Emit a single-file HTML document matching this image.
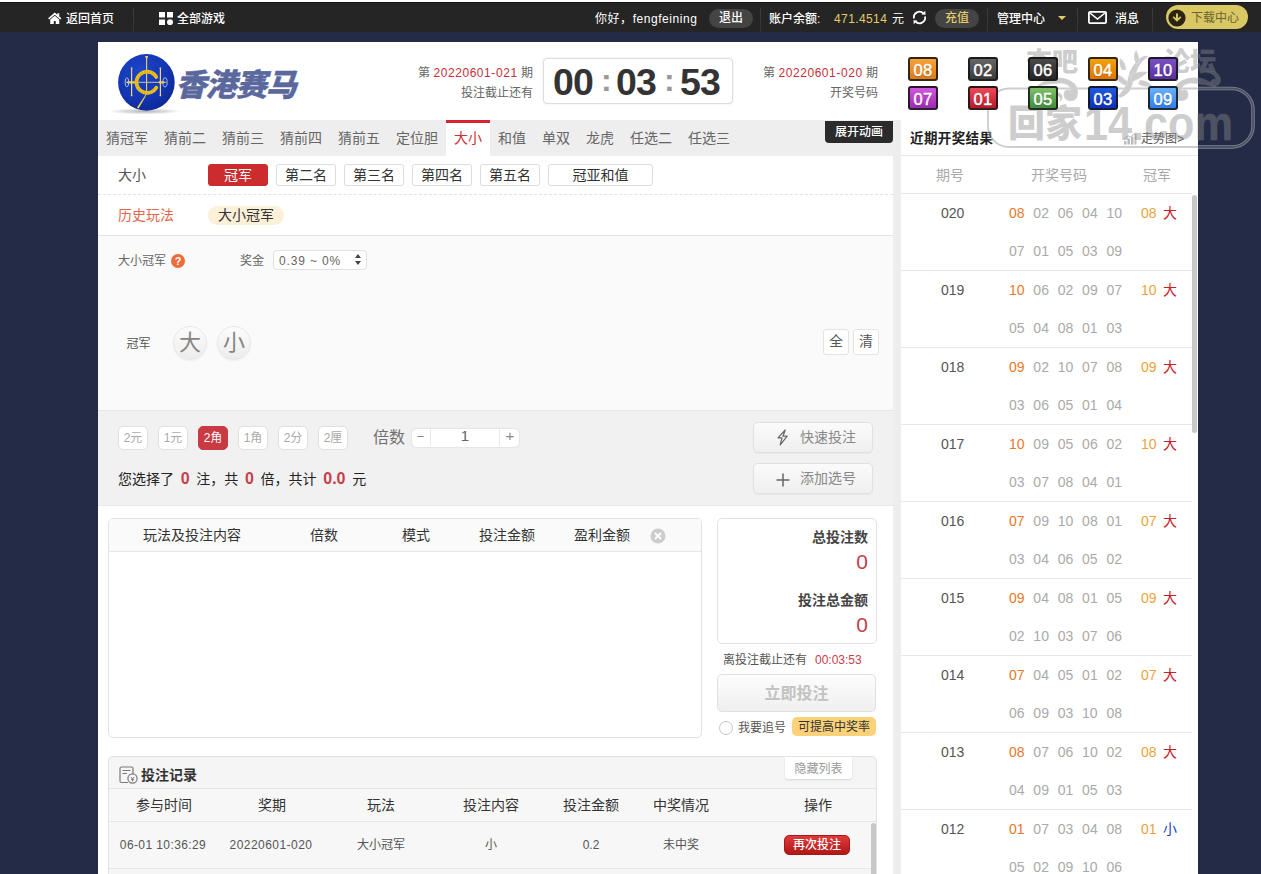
<!DOCTYPE html>
<html lang="zh-CN">
<head>
<meta charset="utf-8">
<title>香港赛马</title>
<style>
*{box-sizing:border-box;margin:0;padding:0}
html,body{width:1261px;height:874px;overflow:hidden}
body{background:#232b47;font-family:"Liberation Sans","Noto Sans CJK SC",sans-serif;font-size:12px;color:#333;position:relative}
.abs{position:absolute}
#topline{position:absolute;left:0;top:0;width:1261px;height:2px;background:#fff}
#topbar{position:absolute;left:0;top:2px;width:1261px;height:30px;background:#252525;box-shadow:inset 0 1px 0 #141414;color:#fff;font-size:12px}
#topbar .t{position:absolute;top:0;height:30px;line-height:35px;white-space:nowrap;font-weight:500}
#topbar .dv{position:absolute;top:6px;width:1px;height:24px;background:linear-gradient(#3e3e3e,#343434)}
.pill{position:absolute;top:7px;height:19px;line-height:19px;border-radius:10px;background:#444;text-align:center;font-weight:500}
#main{position:absolute;left:98px;top:42px;width:1100px;height:832px;background:#fff}
/* header */
#hdr{position:absolute;left:0;top:0;width:1100px;height:78px;background:#fff}
.issue{position:absolute;text-align:right;font-size:12px;line-height:20px;color:#666;white-space:nowrap}
.issue b{font-weight:normal;color:#c5303a;letter-spacing:.57px}
#timer{position:absolute;left:445px;top:16px;width:190px;height:46px;border:1px solid #ddd;border-radius:4px;background:#fff;box-shadow:0 0 3px rgba(0,0,0,.08)}
#timer span{position:absolute;top:1px;line-height:45px;font-size:37.5px;font-weight:bold;color:#333;letter-spacing:-.8px}
#timer i{position:absolute;top:-1.5px;line-height:45px;font-size:32px;font-weight:bold;color:#999;font-style:normal}
.ball{position:absolute;z-index:6;width:30px;height:24px;border-radius:3px;border:2px solid rgba(20,20,20,.85);color:#fff;font-size:16.5px;line-height:22px;text-align:center;-webkit-text-stroke:.45px #fff;letter-spacing:.3px;text-shadow:0 1px 1px rgba(0,0,0,.3)}
/* tabs */
#tabs{position:absolute;left:0;top:78px;width:795px;height:36px;background:#eee}
#tabs span{position:absolute;top:0;height:36px;line-height:37px;font-size:14px;color:#666;white-space:nowrap}
#tabs .on{background:#fff;border-top:3px solid #d9232e;color:#cb333b;padding:0 8px;line-height:31px}
#anim{position:absolute;left:727px;top:79px;width:68px;height:21.5px;background:#2b2b2b;color:#fff;font-size:12px;font-weight:500;line-height:22px;text-align:center;border-radius:0 0 4px 4px}
#gap{position:absolute;left:795px;top:78px;width:8px;height:754px;background:#eee}

/* left panel */
#lp{position:absolute;left:0;top:114px;width:795px;height:718px;background:#fff}
.row1 .lbl{position:absolute;left:20px;top:9px;font-size:14px;line-height:20px;color:#555}
.sbtn{position:absolute;top:8px;height:22px;width:60px;line-height:20px;border:1px solid #ddd;border-radius:3px;background:#fff;font-size:14px;color:#333;text-align:center}
.sbtn.on{background:#cd2c2f;border-color:#cd2c2f;color:#fff}
#dash{position:absolute;left:0;top:38px;width:795px;height:0;border-top:1px dashed #e3e3e3}
#play{position:absolute;left:0;top:79px;width:795px;height:175px;background:#fafafa;border-top:1px solid #e4e4e4}
.circ{position:absolute;top:90px;width:34px;height:34px;border-radius:50%;background:linear-gradient(#fcfcfc,#ececec);border:1px solid #e8e8e8;color:#858585;font-size:22px;line-height:32px;text-align:center;box-shadow:0 1px 2px rgba(0,0,0,.05)}
.qbtn{position:absolute;top:93px;width:26px;height:26px;border:1px solid #e4e4e4;border-radius:3px;background:#fff;color:#555;font-size:14px;line-height:23px;text-align:center}
#band{position:absolute;left:0;top:254px;width:795px;height:96px;background:#f1f1f1;border-top:1px solid #e6e6e6;border-bottom:1px solid #e9e9e9}
.unit{position:absolute;top:15px;width:30px;height:24px;border:1px solid #e0e0e0;border-radius:5px;background:#fff;color:#aaa;font-size:12px;line-height:22px;text-align:center}
.unit.on{background:#c93a43;border-color:#c93a43;color:#fff}
.gbtn{position:absolute;left:655px;width:120px;height:31px;border:1px solid #e0e0e0;border-radius:5px;background:linear-gradient(#fbfbfb,#efefef);color:#888;font-size:14px;line-height:29px;padding-left:46px;box-shadow:0 1px 1px rgba(0,0,0,.04)}
#betbox{position:absolute;left:10px;top:362px;width:594px;height:220px;border:1px solid #e2e2e2;border-radius:5px;background:#fff;overflow:hidden}
#betbox .h{position:absolute;left:0;top:0;width:100%;height:33px;background:#fafafa;border-bottom:1px solid #e6e6e6}
#betbox .h span{position:absolute;top:0;line-height:32px;font-size:14px;color:#333;white-space:nowrap}
#sum{position:absolute;left:619px;top:362px;width:160px;height:126px;border:1px solid #e2e2e2;border-radius:5px;background:#fff}
#sum .k{position:absolute;right:8px;font-size:14px;font-weight:bold;color:#444;line-height:20px;white-space:nowrap}
#sum .v{position:absolute;right:8px;font-size:21px;color:#c5404a;line-height:24px}
#go{position:absolute;left:619px;top:518px;width:159px;height:38px;border:1px solid #e0e0e0;border-radius:5px;background:linear-gradient(#fdfdfd,#efefef);color:#c2c2c2;font-size:16px;font-weight:bold;line-height:37px;text-align:center}
#rec{position:absolute;left:10px;top:600px;width:769px;height:130px;border:1px solid #e2e2e2;border-radius:5px 5px 0 0;background:#f5f5f5;overflow:hidden}
#rec .th{position:absolute;top:31px;left:0;width:100%;height:34px;border-top:1px solid #e6e6e6;border-bottom:1px solid #e6e6e6;background:#f7f7f7}
#rec .th span,#rec .tr span{position:absolute;top:0;transform:translateX(-50%);white-space:nowrap}
#rec .th span{font-size:14px;line-height:32px;color:#333}
#rec .tr{position:absolute;top:65px;left:0;width:100%;height:47px;border-bottom:1px solid #e6e6e6;background:#f7f7f7}
#rec .tr span{font-size:12px;line-height:46px;color:#555}
.rn{color:#c5404a;font-size:16px;font-weight:bold;margin:0 2.8px}

/* right panel */
#rp{position:absolute;left:803px;top:78px;width:297px;height:754px;background:#fff;overflow:hidden}
#rp .ttl{position:absolute;left:9px;top:8px;font-size:13.5px;font-weight:bold;line-height:22px;color:#222;letter-spacing:.4px}
#rp .trend{position:absolute;left:240px;top:9px;font-size:12px;line-height:20px;color:#555;white-space:nowrap}
#rp .hl{position:absolute;left:0;width:291px;height:1px;background:#e8e8e8}
#rp .ch{position:absolute;top:45px;font-size:14px;line-height:20px;color:#aaa;white-space:nowrap}
.rr{position:absolute;left:0;width:291px;height:77px;border-bottom:1px solid #e8e8e8;font-size:14px}
.rr span{position:absolute;line-height:20px;white-space:nowrap}
.rr .p{left:40px;top:9px;color:#555}
.rr .a{left:108px;top:9px;color:#aaa;word-spacing:4.9px}
.rr .b{left:108px;top:47px;color:#aaa;word-spacing:4.9px}
.rr .a em{font-style:normal;color:#e8792a}
.rr .w{left:240px;top:9px;color:#e9a43c}
.rr .x{left:262px;top:9px;color:#c8202a}
.rr .x.s{color:#1a3fc0}
</style>
</head>
<body>
<div id="topline"></div>
<div id="topbar">
  <svg class="abs" style="left:48px;top:10px" width="13.5" height="12.5" viewBox="0 0 15 13"><path d="M7.5 0.2 L0.1 6.6 L1.3 7.9 L7.5 2.6 L13.7 7.9 L14.9 6.6 L12.5 4.5 L12.5 0.9 L10.4 0.9 L10.4 2.7 Z" fill="#fff"/><path d="M7.5 3.7 L2.5 8 L2.5 12.8 L6.4 12.8 L6.4 9.6 L8.6 9.6 L8.6 12.8 L12.5 12.8 L12.5 8 Z" fill="#fff"/></svg>
  <span class="t" style="left:66px">返回首页</span>
  <div class="dv" style="left:133px"></div>
  <svg class="abs" style="left:159px;top:10px" width="14" height="13" viewBox="0 0 14 13"><rect x="0" y="0" width="6" height="5.5" fill="#fff"/><rect x="8" y="0" width="6" height="5.5" fill="#fff"/><rect x="0" y="7.5" width="6" height="5.5" fill="#fff"/><circle cx="11" cy="10.2" r="3" fill="#fff"/></svg>
  <span class="t" style="left:177px">全部游戏</span>
  <span class="t" style="left:595px;font-weight:normal;letter-spacing:.55px">你好，fengfeining</span>
  <div class="pill" style="left:709px;width:44px;color:#fff">退出</div>
  <div class="dv" style="left:760px"></div>
  <span class="t" style="left:769px">账户余额:</span>
  <span class="t" style="left:834px;color:#e3cb6a;font-weight:normal;letter-spacing:.4px">471.4514</span>
  <span class="t" style="left:892px;font-weight:normal">元</span>
  <svg class="abs" style="left:911px;top:7px" width="17" height="17" viewBox="0 0 17 17"><path d="M3 9.5 A5.6 5.6 0 0 1 12.6 4.6" fill="none" stroke="#fff" stroke-width="1.8"/><path d="M14 7.5 A5.6 5.6 0 0 1 4.4 12.4" fill="none" stroke="#fff" stroke-width="1.8"/><path d="M10.6 5.6 L14.6 5.8 L14.2 1.8 Z" fill="#fff"/><path d="M6.4 11.4 L2.4 11.2 L2.8 15.2 Z" fill="#fff"/></svg>
  <div class="pill" style="left:935px;width:44px;color:#e3cb6a">充值</div>
  <div class="dv" style="left:987px"></div>
  <span class="t" style="left:997px">管理中心</span>
  <div class="abs" style="left:1058px;top:14px;width:0;height:0;border-left:4px solid transparent;border-right:4px solid transparent;border-top:4px solid #e3cb6a"></div>
  <div class="dv" style="left:1077px"></div>
  <svg class="abs" style="left:1088px;top:9px" width="19" height="13" viewBox="0 0 19 13"><rect x="0.9" y="0.9" width="17.2" height="11.2" rx="1.2" fill="none" stroke="#fff" stroke-width="1.8"/><path d="M2 2 L9.5 8 L17 2" fill="none" stroke="#fff" stroke-width="1.6"/></svg>
  <span class="t" style="left:1115px">消息</span>
  <div class="dv" style="left:1152px"></div>
  <div class="pill" style="left:1166px;width:82px;top:3px;height:24px;line-height:27px;border-radius:12px;background:#d9c864;color:#6b6330;font-weight:normal;text-align:left;padding-left:25px">下载中心</div>
  <svg class="abs" style="left:1168px;top:6.5px" width="18" height="18" viewBox="0 0 18 18"><circle cx="9" cy="9" r="8.6" fill="#2a2410"/><path d="M8 4.4 H10 V9.2 L12.2 7.2 L13.4 8.5 L9 12.8 L4.6 8.5 L5.8 7.2 L8 9.2 Z" fill="#d9c864"/></svg>
</div>

<div id="main">
  <div id="hdr">
    <!-- logo -->
    <svg class="abs" style="left:7px;top:3px" width="100" height="75" viewBox="0 0 100 75">
      <defs>
        <radialGradient id="lg" cx="38%" cy="30%" r="80%"><stop offset="0" stop-color="#1c45c8"/><stop offset=".6" stop-color="#1335b2"/><stop offset="1" stop-color="#0b2694"/></radialGradient>
        <radialGradient id="sh" cx="50%" cy="50%" r="50%"><stop offset="0" stop-color="#9a9a9a" stop-opacity=".75"/><stop offset=".6" stop-color="#b5b5b5" stop-opacity=".45"/><stop offset="1" stop-color="#ccc" stop-opacity="0"/></radialGradient>
      </defs>
      <ellipse cx="40" cy="66.3" rx="37" ry="3.2" fill="url(#sh)"/>
      <circle cx="41.4" cy="37.4" r="28.3" fill="url(#lg)"/>
      <path d="M41.6 11.5 V47" stroke="#ecd257" stroke-width="1.1" fill="none"/>
      <path d="M40 11 H43.2 L41.9 14.5 H41.3 Z" fill="#ecd257"/>
      <path d="M21 37.3 H61.5" stroke="#d8d690" stroke-width=".9" fill="none"/>
      <path d="M23 37.3 H30 M54.5 37.3 H58.5" stroke="#efc92a" stroke-width="2.2" fill="none" stroke-linecap="round"/>
      <path d="M26.6 23.2 V50.6 M55.4 23.2 V50.6" stroke="#ecd680" stroke-width="1.2" fill="none"/>
      <path d="M25.8 23.2 H27.4 M25.8 50.6 H27.4 M54.6 23.2 H56.2 M54.6 50.6 H56.2" stroke="#ecd680" stroke-width="1.2"/>
      <ellipse cx="21.9" cy="37.3" rx="1.8" ry="4.6" fill="none" stroke="#b9cbe8" stroke-width=".9"/>
      <ellipse cx="60" cy="37.3" rx="2.1" ry="4.6" fill="none" stroke="#b9cbe8" stroke-width=".9"/>
      <path d="M51.3 32 A10.6 10.6 0 1 0 51.3 42.6" fill="none" stroke="#efc41f" stroke-width="3.7" stroke-linecap="round"/>
      <path d="M51.3 32 A10.6 10.6 0 1 0 51.3 42.6" fill="none" stroke="#c98a12" stroke-width="2.2" stroke-dasharray="1 1.6" opacity=".55"/>
      <path d="M41.6 47.5 Q41.4 50 40.3 52 L33.6 63.6 L32 62.4 L39.4 51.4 Z" fill="#efd04a"/>
    </svg>
    <div class="abs" style="left:77.500px;top:21.5px;font-size:31px;line-height:44px;font-weight:900;font-style:italic;color:#5a689d;-webkit-text-stroke:.35px #5a689d;letter-spacing:-.9px;white-space:nowrap">香港赛马</div>
    <div class="issue" style="right:665px;top:21px">第 <b>20220601-021</b> 期<br>投注截止还有</div>
    <div id="timer"><span style="left:9px">00</span><i style="left:57px">:</i><span style="left:72px">03</span><i style="left:120px">:</i><span style="left:136px">53</span></div>
    <div class="issue" style="right:320px;top:21px">第 <b>20220601-020</b> 期<br>开奖号码</div>
    <div class="ball" style="left:810px;top:15px;background:linear-gradient(#f5a33d,#e07b12)">08</div>
    <div class="ball" style="left:870px;top:15px;background:linear-gradient(#666,#3c3c3c)">02</div>
    <div class="ball" style="left:930px;top:15px;background:linear-gradient(#4a4a4a,#262626)">06</div>
    <div class="ball" style="left:990px;top:15px;background:linear-gradient(#f2a20c,#e07400)">04</div>
    <div class="ball" style="left:1050px;top:15px;background:linear-gradient(#7a4fc4,#5a2fa0)">10</div>
    <div class="ball" style="left:810px;top:44px;background:linear-gradient(#d457e0,#9a2bb0)">07</div>
    <div class="ball" style="left:870px;top:44px;background:linear-gradient(#ee4a5a,#b81a2a)">01</div>
    <div class="ball" style="left:930px;top:44px;background:linear-gradient(#7fbf6a,#3f8f3a)">05</div>
    <div class="ball" style="left:990px;top:44px;background:linear-gradient(#1f5be0,#0a2fc0)">03</div>
    <div class="ball" style="left:1050px;top:44px;background:linear-gradient(#6ab0ff,#2f7fe8)">09</div>
  </div>
  <div id="tabs">
    <span style="left:8px">猜冠军</span><span style="left:66px">猜前二</span><span style="left:124px">猜前三</span><span style="left:182px">猜前四</span><span style="left:240px">猜前五</span><span style="left:298px">定位胆</span>
    <span class="on" style="left:348px">大小</span>
    <span style="left:400px">和值</span><span style="left:444px">单双</span><span style="left:488px">龙虎</span><span style="left:532px">任选二</span><span style="left:590px">任选三</span>
  </div>
  <div id="anim">展开动画</div>

  <div id="lp">
    <div class="row1">
      <span class="lbl">大小</span>
      <div class="sbtn on" style="left:110px">冠军</div>
      <div class="sbtn" style="left:178px">第二名</div>
      <div class="sbtn" style="left:246px">第三名</div>
      <div class="sbtn" style="left:314px">第四名</div>
      <div class="sbtn" style="left:382px">第五名</div>
      <div class="sbtn" style="left:450px;width:105px">冠亚和值</div>
    </div>
    <div id="dash"></div>
    <span class="abs" style="left:20px;top:49px;font-size:14px;line-height:20px;color:#e2664c">历史玩法</span>
    <span class="abs" style="left:110px;top:50px;width:76px;height:19px;border-radius:10px;background:#fdf0d9;font-size:14px;line-height:19px;color:#333;text-align:center">大小冠军</span>
    <div id="play">
      <span class="abs" style="left:20px;top:15px;font-size:12px;line-height:20px;color:#666">大小冠军</span>
      <span class="abs" style="left:73px;top:18px;width:14px;height:14px;border-radius:50%;background:#ee6b3a;color:#fff;font-size:11px;font-weight:bold;line-height:14px;text-align:center">?</span>
      <span class="abs" style="left:142px;top:15px;font-size:12px;line-height:20px;color:#666">奖金</span>
      <div class="abs" style="left:175px;top:14px;width:94px;height:20px;border:1px solid #e0e0e0;border-radius:4px;background:#fff;font-size:12px;line-height:20px;color:#666;padding-left:5px;letter-spacing:.85px">0.39 ~ 0%</div>
      <div class="abs" style="left:257px;top:18px;width:0;height:0;border-left:3px solid transparent;border-right:3px solid transparent;border-bottom:4px solid #444"></div>
      <div class="abs" style="left:257px;top:25px;width:0;height:0;border-left:3px solid transparent;border-right:3px solid transparent;border-top:4px solid #444"></div>
      <span class="abs" style="left:28.5px;top:97.5px;font-size:12px;line-height:20px;color:#555">冠军</span>
      <div class="circ" style="left:75px">大</div>
      <div class="circ" style="left:119px">小</div>
      <div class="qbtn" style="left:725px">全</div>
      <div class="qbtn" style="left:755px">清</div>
    </div>
    <div id="band">
      <div class="unit" style="left:20px">2元</div>
      <div class="unit" style="left:60px">1元</div>
      <div class="unit on" style="left:100px">2角</div>
      <div class="unit" style="left:140px">1角</div>
      <div class="unit" style="left:180px">2分</div>
      <div class="unit" style="left:220px">2厘</div>
      <span class="abs" style="left:275px;top:15px;font-size:16px;line-height:24px;color:#707070">倍数</span>
      <div class="abs" style="left:312.5px;top:16.5px;width:109px;height:20px;border:1px solid #e6e6e6;border-radius:6px;background:#fff;box-shadow:0 0 2px rgba(0,0,0,.04)"></div>
      <div class="abs" style="left:332px;top:18px;width:1px;height:17px;background:#e8e8e8"></div>
      <div class="abs" style="left:401px;top:18px;width:1px;height:17px;background:#e8e8e8"></div>
      <span class="abs" style="left:313px;top:17px;width:19px;line-height:18px;text-align:center;color:#888;font-size:13px">−</span>
      <span class="abs" style="left:402px;top:15px;width:20px;line-height:19px;text-align:center;color:#888;font-size:15px">+</span>
      <span class="abs" style="left:333px;top:15px;width:68px;line-height:20px;text-align:center;color:#666;font-size:15px">1</span>
      <div class="abs" style="left:20px;top:56px;font-size:14px;line-height:24px;color:#222;white-space:nowrap">您选择了 <b class="rn">0</b> 注，共 <b class="rn">0</b> 倍，共计 <b class="rn">0.0</b> 元</div>
      <div class="gbtn" style="top:11px">快速投注</div>
      <svg class="abs" style="left:677.5px;top:17.5px" width="13" height="17" viewBox="0 0 13 17"><path d="M9.2 1 L2 8.9 L6 8.9 L4.2 15.8 L11.2 7.2 L7 7.2 Z" fill="none" stroke="#666" stroke-width="1.2" stroke-linejoin="round"/></svg>
      <div class="gbtn" style="top:52px">添加选号</div>
      <svg class="abs" style="left:678px;top:61.5px" width="14" height="14" viewBox="0 0 14 14"><path d="M7 0.5 V13.5 M0.5 7 H13.5" stroke="#666" stroke-width="1.5"/></svg>
    </div>
    <div id="betbox">
      <div class="h"><span style="left:34px">玩法及投注内容</span><span style="left:201px">倍数</span><span style="left:293px">模式</span><span style="left:370px">投注金额</span><span style="left:465px">盈利金额</span>
        <svg class="abs" style="left:541px;top:9px" width="16" height="16" viewBox="0 0 16 16"><circle cx="8" cy="8" r="7.5" fill="#ccc"/><path d="M5 5 L11 11 M11 5 L5 11" stroke="#fff" stroke-width="1.8"/></svg>
      </div>
    </div>
    <div id="sum">
      <span class="k" style="top:8px">总投注数</span><span class="v" style="top:31px">0</span>
      <span class="k" style="top:71px">投注总金额</span><span class="v" style="top:94px">0</span>
    </div>
    <span class="abs" style="left:625px;top:494px;font-size:12px;line-height:20px;color:#555;white-space:nowrap">离投注截止还有</span>
    <span class="abs" style="left:717px;top:494px;font-size:12px;line-height:20px;color:#c5404a;white-space:nowrap">00:03:53</span>
    <div id="go">立即投注</div>
    <div class="abs" style="left:621px;top:565px;width:14px;height:14px;border:1px solid #c6c6c6;border-radius:50%;background:#fff"></div>
    <span class="abs" style="left:640px;top:562px;font-size:12px;line-height:20px;color:#555;white-space:nowrap">我要追号</span>
    <span class="abs" style="left:694px;top:561px;width:84px;height:19px;border-radius:5px;background:#fbd27a;font-size:12px;line-height:21px;color:#333;text-align:center">可提高中奖率</span>
    <div id="rec">
      <svg class="abs" style="left:9.5px;top:9px" width="20" height="18" viewBox="0 0 20 18"><path d="M9 16.5 H2.5 Q1 16.5 1 15 V2.5 Q1 1 2.5 1 H12.5 Q14 1 14 2.5 V8" fill="none" stroke="#7a7a7a" stroke-width="1.2"/><path d="M3.5 4.5 H11.5 M3.5 7.5 H8" stroke="#7a7a7a" stroke-width="1.2"/><circle cx="13.5" cy="12.5" r="4.6" fill="#f5f5f5" stroke="#7a7a7a" stroke-width="1.2"/><path d="M11.8 11 L13.5 13 L15.2 11 M13.5 13 V15.5 M12 13.6 H15" fill="none" stroke="#7a7a7a" stroke-width="1"/></svg>
      <span class="abs" style="left:32px;top:6.5px;font-size:14px;font-weight:bold;line-height:22px;color:#333">投注记录</span>
      <div class="abs" style="left:676px;top:0;width:67px;height:22px;background:#fff;color:#999;font-size:12px;line-height:25px;text-align:center;border-radius:0 0 3px 3px;box-shadow:0 1px 2px rgba(0,0,0,.12)">隐藏列表</div>
      <div class="th"><span style="left:55px">参与时间</span><span style="left:163px">奖期</span><span style="left:272px">玩法</span><span style="left:382px">投注内容</span><span style="left:482px">投注金额</span><span style="left:572px">中奖情况</span><span style="left:709px">操作</span></div>
      <div class="tr"><span style="left:54px;letter-spacing:.4px">06-01 10:36:29</span><span style="left:162px;letter-spacing:.45px">20220601-020</span><span style="left:272px">大小冠军</span><span style="left:382px">小</span><span style="left:482px">0.2</span><span style="left:572px">未中奖</span>
        <div class="abs" style="left:675px;top:13px;width:66px;height:20px;border-radius:5px;background:linear-gradient(#e03a3a,#b01818);border:1px solid #a81818;color:#fff;font-size:12px;font-weight:500;line-height:18px;text-align:center">再次投注</div>
      </div>
      <div class="abs" style="left:762px;top:66px;width:5px;height:70px;border-radius:3px;background:#c8c8c8"></div>
    </div>
  </div>
  <div id="gap"></div>
  <div id="rp">
    <span class="ttl">近期开奖结果</span>
    <svg class="abs" style="left:222px;top:12px" width="14" height="13" viewBox="0 0 14 13"><path d="M1 12.5 V9 H3.5 V12.5 M4.5 12.5 V6.5 H7 V12.5 M8 12.5 V4.5 H10.5 V12.5 M11.5 12.5 V2 H13.5 V12.5" fill="#bbb"/><path d="M1 7 L5 3.8 L7.5 5 L12.5 0.8" fill="none" stroke="#bbb" stroke-width="1"/></svg>
    <span class="trend">走势图&gt;</span>
    <div class="hl" style="top:35px;width:297px"></div>
    <span class="ch" style="left:35px">期号</span><span class="ch" style="left:130px">开奖号码</span><span class="ch" style="left:242px">冠军</span>
    <div class="hl" style="top:73px"></div>
    <div class="rr" style="top:74px"><span class="p">020</span><span class="a"><em>08</em> 02 06 04 10</span><span class="b">07 01 05 03 09</span><span class="w">08</span><span class="x">大</span></div>
    <div class="rr" style="top:151px"><span class="p">019</span><span class="a"><em>10</em> 06 02 09 07</span><span class="b">05 04 08 01 03</span><span class="w">10</span><span class="x">大</span></div>
    <div class="rr" style="top:228px"><span class="p">018</span><span class="a"><em>09</em> 02 10 07 08</span><span class="b">03 06 05 01 04</span><span class="w">09</span><span class="x">大</span></div>
    <div class="rr" style="top:305px"><span class="p">017</span><span class="a"><em>10</em> 09 05 06 02</span><span class="b">03 07 08 04 01</span><span class="w">10</span><span class="x">大</span></div>
    <div class="rr" style="top:382px"><span class="p">016</span><span class="a"><em>07</em> 09 10 08 01</span><span class="b">03 04 06 05 02</span><span class="w">07</span><span class="x">大</span></div>
    <div class="rr" style="top:459px"><span class="p">015</span><span class="a"><em>09</em> 04 08 01 05</span><span class="b">02 10 03 07 06</span><span class="w">09</span><span class="x">大</span></div>
    <div class="rr" style="top:536px"><span class="p">014</span><span class="a"><em>07</em> 04 05 01 02</span><span class="b">06 09 03 10 08</span><span class="w">07</span><span class="x">大</span></div>
    <div class="rr" style="top:613px"><span class="p">013</span><span class="a"><em>08</em> 07 06 10 02</span><span class="b">04 09 01 05 03</span><span class="w">08</span><span class="x">大</span></div>
    <div class="rr" style="top:690px"><span class="p">012</span><span class="a"><em>01</em> 07 03 04 08</span><span class="b">05 02 09 10 06</span><span class="w">01</span><span class="x s">小</span></div>
    <div class="abs" style="left:291px;top:75px;width:5px;height:238px;border-radius:3px;background:#c8c8c8"></div>
  </div>

</div>

<svg id="wm" style="position:absolute;left:980px;top:36px;pointer-events:none;z-index:5" width="281" height="120" viewBox="0 0 281 120">
  <g opacity=".42">
    <rect x="8" y="52.5" width="265" height="58.5" rx="21" fill="none" stroke="#fff" stroke-width="3.4"/>
    <rect x="8" y="52.5" width="265" height="58.5" rx="21" fill="none" stroke="#8a8a8a" stroke-width="1.8"/>
    <g font-family="'Liberation Sans','Noto Sans CJK SC',sans-serif" font-weight="900" fill="#8a8a8a" stroke="#fff" stroke-width=".5" stroke-opacity=".6" paint-order="stroke">
      <text x="46" y="34.5" font-size="26">杏吧</text>
      <text x="184" y="34.5" font-size="26">论坛</text>
      <text x="28" y="101" font-size="37">回家</text>
      <text x="0" y="0" font-size="48" font-weight="bold" transform="translate(104,103.5) scale(.9,1)">14.com</text>
    </g>
    <g fill="#8a8a8a" stroke="#fff" stroke-width=".4" stroke-opacity=".6">
      <path d="M56 51 Q68 39 84 42 Q99 46 98 58 Q97 66 89 65 Q82 63 84 56 Q86 52 90.5 54.5 Q90 48 82 47.5 Q69 47 56 51 Z"/>
      <path d="M72 58 Q78 54 82 59 Q84 64 79 66 Q83 60 72 58 Z"/>
      <path d="M236 51 Q224 39 208 42 Q193 46 194 58 Q195 66 203 65 Q210 63 208 56 Q206 52 201.500 54.5 Q202 48 210 47.5 Q223 47 236 51 Z"/>
      <path d="M226 36 Q236 33 240 41 Q242 49 235 50 Q230 50 231 45 Q233 42 236 44 Q236 38 226 36 Z"/>
      <path d="M138 60 Q146 52 148 42 Q150 30 160 22 Q164 19 169 20 Q162 24 158 32 Q154 42 152 50 Q150 58 140 62 Z"/>
      <path d="M150 40 Q158 34 168 36 Q162 42 152 46 Z"/>
      <path d="M146 50 Q136 46 134 36 Q142 40 148 46 Z"/>
      <path d="M156 28 Q152 20 156 14 Q160 20 159 27 Z"/>
      <path d="M160 44 Q168 44 172 50 Q164 52 158 48 Z"/>
      <path d="M142 34 Q138 28 140 22 Q146 26 146 34 Z"/>
    </g>
  </g>
</svg>
</body>
</html>
